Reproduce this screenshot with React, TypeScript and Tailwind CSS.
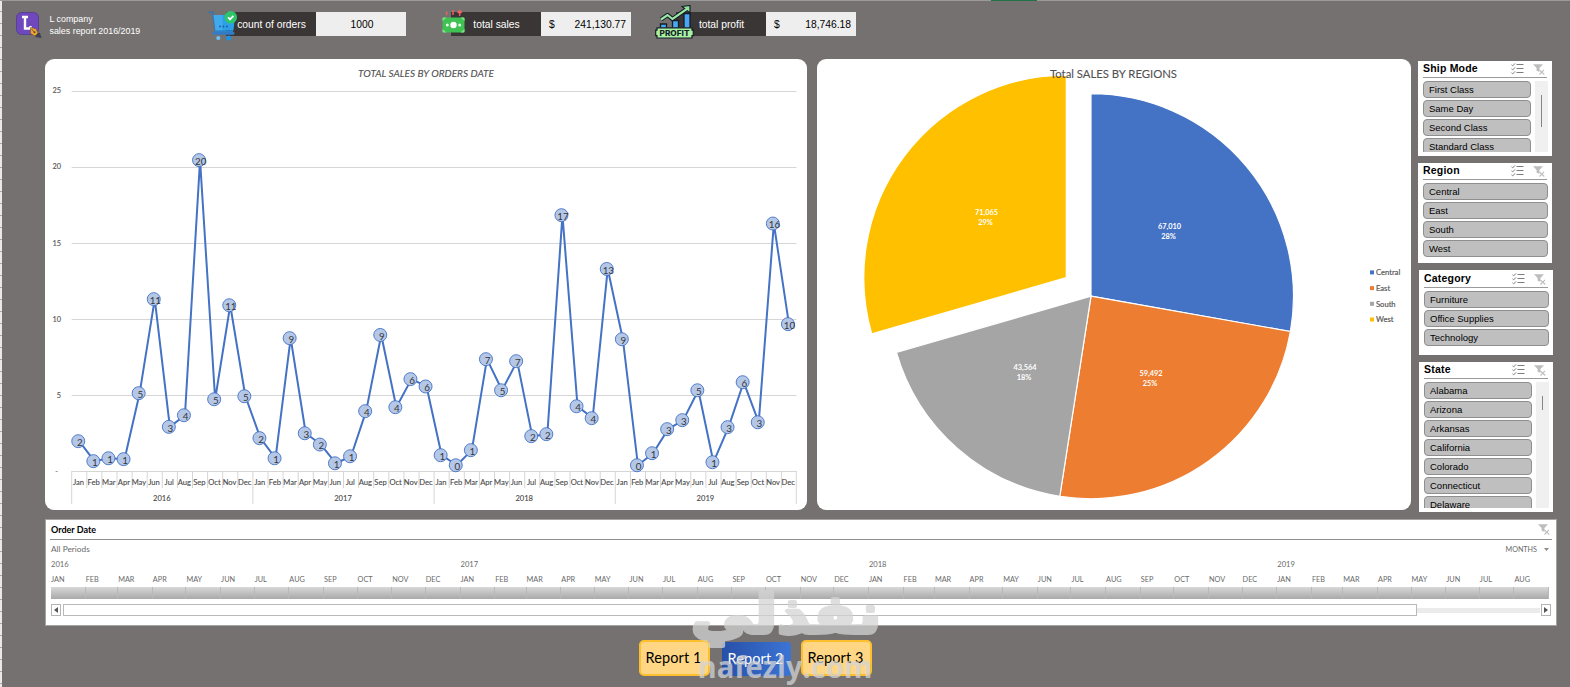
import type { ReactNode } from 'react';

const MONTHS = ['Jan', 'Feb', 'Mar', 'Apr', 'May', 'Jun', 'Jul', 'Aug', 'Sep', 'Oct', 'Nov', 'Dec'];
const YEARS = [2016, 2017, 2018, 2019];

// monthly sales, in thousands
const SALES = [
  1.99, 0.68, 0.87, 0.81, 5.14, 11.31, 2.93, 3.69, 20.43, 4.74, 10.91, 4.94,
  2.19, 0.87, 8.75, 2.51, 1.77, 0.54, 1.0, 3.96, 8.96, 4.22, 6.06, 5.58,
  1.07, 0.41, 1.4, 7.37, 5.33, 7.24, 2.32, 2.45, 16.82, 4.28, 3.5, 13.29,
  8.68, 0.41, 1.2, 2.78, 3.37, 5.33, 0.61, 2.91, 5.86, 3.23, 16.27, 9.67,
];

const REGIONS = [
  { name: 'Central', value: 67010, label: '67,010', percent: '28%', color: '#4472c4', x: 1169.5, y: 227 },
  { name: 'East', value: 59492, label: '59,492', percent: '25%', color: '#ed7d31', x: 1151, y: 374 },
  { name: 'South', value: 43564, label: '43,564', percent: '18%', color: '#a5a5a5', x: 1025, y: 368 },
  { name: 'West', value: 71065, label: '71,065', percent: '29%', color: '#ffc000', x: 986.5, y: 213 },
];

const STEP = 15.1;
const LEFT = 71.7;
const BASE = 471.5;
const pointX = (i: number) => LEFT + (i + 0.5) * STEP;
const pointY = (v: number) => BASE - v * 15.24;

function LineChart() {
  return (
    <section className="h-[451px] w-[762px] overflow-hidden rounded-[9px] bg-white">
      <svg className="block font-[Lato,sans-serif]" width="762" height="451" viewBox="45 59 762 451">
        <text x="426" y="77" textAnchor="middle" fontSize="10.4" fontStyle="italic" fill="#505050" stroke="#505050" strokeWidth="0.1" textLength="136" lengthAdjust="spacingAndGlyphs">
          TOTAL SALES BY ORDERS DATE
        </text>
        {[0, 5, 10, 15, 20, 25].map((v) => (
          <g key={v}>
            <line x1={LEFT} x2="796.5" y1={Math.round(pointY(v)) + (v ? 0.5 : -0.5)} y2={Math.round(pointY(v)) + (v ? 0.5 : -0.5)} stroke="#d6d6d6" />
            <text x={v ? 61 : 58} y={pointY(v) + 2.6} textAnchor="end" fontSize="7.4" fill="#595959" stroke="#595959" strokeWidth="0.15">
              {v || '-'}
            </text>
          </g>
        ))}
        {SALES.map((_, i) => (
          <g key={i}>
            <line x1={LEFT + i * STEP} x2={LEFT + i * STEP} y1="471" y2={i % 12 ? 488 : 504} stroke="#d6d6d6" />
            <text x={pointX(i) - 0.7} y="485" textAnchor="middle" fontSize="7.6" fill="#484848" stroke="#484848" strokeWidth="0.1">
              {MONTHS[i % 12]}
            </text>
          </g>
        ))}
        <line x1="796.3" x2="796.3" y1="471" y2="504" stroke="#d6d6d6" />
        {YEARS.map((year, i) => (
          <text key={year} x={LEFT + (i + 0.5) * 12 * STEP - 0.5} y="501" textAnchor="middle" fontSize="7.6" fill="#484848" stroke="#484848" strokeWidth="0.1">
            {year}
          </text>
        ))}
        <polyline fill="none" stroke="#4472c4" strokeWidth="2" strokeLinejoin="round" points={SALES.map((v, i) => `${pointX(i)},${pointY(v)}`).join(' ')} />
        {SALES.map((v, i) => (
          <g key={i}>
            <circle cx={pointX(i) - 1} cy={pointY(v)} r="6.5" fill="#b4c7e7" stroke="#4472c4" strokeWidth="0.9" />
            <text x={pointX(i) + 0.6} y={pointY(v) + 4.8} textAnchor="middle" fontSize="9.8" fill="#363636">
              {Math.round(v)}
            </text>
          </g>
        ))}
      </svg>
    </section>
  );
}

function slicePath(cx: number, cy: number, r: number, from: number, to: number) {
  const x = (a: number) => cx + r * Math.sin(a);
  const y = (a: number) => cy - r * Math.cos(a);
  return `M${cx} ${cy}L${x(from)} ${y(from)}A${r} ${r} 0 0 1 ${x(to)} ${y(to)}Z`;
}

function PieChart() {
  const total = REGIONS.reduce((sum, r) => sum + r.value, 0);
  let angle = 0;
  const slices = REGIONS.map((r) => {
    const from = angle;
    angle += (r.value / total) * Math.PI * 2;
    return { ...r, from, to: angle };
  });

  return (
    <section className="h-[451px] w-[594px] overflow-hidden rounded-[9px] bg-white">
      <svg className="block font-[Lato,sans-serif]" width="594" height="451" viewBox="817 59 594 451">
        {slices.map((s) => (
          <path
            key={s.name}
            d={s.name === 'West' ? slicePath(1066.3, 277.7, 202.5, s.from, s.to) : slicePath(1091, 296.2, 202.5, s.from, s.to)}
            fill={s.color}
            stroke="#fff"
            strokeWidth="1.2"
          />
        ))}
        {slices.map((s) => (
          <g key={s.name} textAnchor="middle" fontSize="7.4" fontWeight="700" fill="#fff">
            <text x={s.x} y={s.y + 2.2}>{s.label}</text>
            <text x={s.x - 1} y={s.y + 12.2}>{s.percent}</text>
          </g>
        ))}
        <text x="1113.5" y="78" textAnchor="middle" fontSize="11.4" fill="#505050" stroke="#505050" strokeWidth="0.1" textLength="127" lengthAdjust="spacingAndGlyphs">
          Total SALES BY REGIONS
        </text>
        {slices.map((s, i) => (
          <g key={s.name}>
            <rect x="1370" y={270.4 + i * 15.7} width="4" height="4" fill={s.color} />
            <text x="1376" y={275.3 + i * 15.7} fontSize="7.6" fill="#595959" stroke="#595959" strokeWidth="0.2">{s.name}</text>
          </g>
        ))}
      </svg>
    </section>
  );
}

function ClearFilterIcon() {
  return (
    <svg width="12" height="11" viewBox="0 0 12 11" fill="none">
      <path d="M0 0.2h10L6.4 4v3.800L3.600 6.800V4z" fill="#bdbdbd" />
      <path d="M6.300 5.800l5 4.700M11 5.800l-4.500 4.700" stroke="#bdbdbd" strokeWidth="1.100" />
    </svg>
  );
}

function MultiSelectIcon() {
  return (
    <svg width="13" height="12" viewBox="0 0 13 12" fill="none" stroke="#7d7d7d" strokeWidth="1">
      <path d="M5.500 1.500h7M5.500 5.500h7M5.500 9.500h7" />
      <path d="M0.500 1.800l1.200 1.100L4 0.400M0.500 5.800l1.200 1.100L4 4.400M0.500 9.800l1.200 1.100L4 8.400" />
    </svg>
  );
}

type SlicerProps = {
  title: string;
  items: string[];
  className: string;
  thumb?: string;
};

function Slicer({ title, items, className, thumb }: SlicerProps) {
  return (
    <section className={`flex w-[134px] flex-col overflow-hidden bg-white pb-1 pl-[5px] pr-1 ${className}`}>
      <header className="mr-px flex h-[17px] shrink-0 items-center border-b border-[#9a9a9a] pr-0.5">
        <h2 className="flex-1 text-[10.5px] font-bold tracking-[0.2px] text-black">{title}</h2>
        <MultiSelectIcon />
        <span className="ml-[9px]">
          <ClearFilterIcon />
        </span>
      </header>
      <div className="mt-[3px] flex min-h-0 flex-1 gap-1 overflow-hidden">
        <ul className="flex flex-1 flex-col gap-0.5">
          {items.map((item) => (
            <li key={item} className="h-[17px] shrink-0 rounded-[4px] border border-[#8f8f8f] bg-[#bfbfbf] px-[5px] text-[9.5px] leading-[15.5px] text-black">
              {item}
            </li>
          ))}
        </ul>
        {thumb && (
          <div className="flex w-[13px] justify-center bg-[#f0f0f0]">
            <div className={`w-px bg-[#858585] ${thumb}`} />
          </div>
        )}
      </div>
    </section>
  );
}

const timeline = YEARS.flatMap((year) =>
  MONTHS.map((name, m) => ({ year, name: name.toUpperCase(), first: m === 0, days: new Date(year, m + 1, 0).getDate() })),
).slice(0, 44);

function Timeline() {
  return (
    <section className="ml-[45px] mt-[7px] h-[107px] w-[1512px] border border-[#a5a3a2] bg-white px-1 font-[Lato,sans-serif] text-[#6a6a6a]">
      <header className="flex h-5 items-center justify-between border-b border-[#8f8f8f] pr-0.5">
        <h2 className="pl-px text-[9px] font-bold text-black">Order Date</h2>
        <ClearFilterIcon />
      </header>
      <div className="flex h-[18px] items-center justify-between pl-px pr-[3px]">
        <span className="pt-px text-[8.3px]">All Periods</span>
        <span className="flex items-center gap-[7px] pt-0.5 text-[7.2px]">
          MONTHS
          <svg width="5" height="3" viewBox="0 0 5 3">
            <path d="M0 0h5L2.5 3z" fill="#8a8a8a" />
          </svg>
        </span>
      </div>
      <div className="flex w-[1499px] pl-px">
        {timeline.map((m) => (
          <div key={`${m.year}-${m.name}`} className="min-w-0 basis-0 text-[7.3px]" style={{ flexGrow: m.days }}>
            <div className="h-[13px] whitespace-nowrap text-[7.6px] leading-[13px]">{m.first ? m.year : ''}</div>
            <div className="h-[15px] leading-[17px]">{m.name}</div>
            <div className="mt-px h-[12px] border-r border-[#b9b9b9] bg-linear-to-b from-[#d8d8d8] to-[#a9a9a9]" />
          </div>
        ))}
      </div>
      <div className="mt-[5px] flex h-3 items-center">
        <span className="ml-px flex h-3 w-2.5 items-center justify-center border border-[#b5b5b5]">
          <svg width="4" height="6" viewBox="0 0 4 6"><path d="M4 0v6L0 3z" fill="#555" /></svg>
        </span>
        <span className="ml-0.5 h-3 w-[1354px] border border-[#b9b9b9]" />
        <span className="h-[5px] flex-1 bg-[#ebebeb]" />
        <span className="ml-px mr-px flex h-3 w-2.5 items-center justify-center border border-[#b5b5b5]">
          <svg width="4" height="6" viewBox="0 0 4 6"><path d="M0 0v6l4-3z" fill="#555" /></svg>
        </span>
      </div>
    </section>
  );
}

function LogoIcon() {
  return (
    <svg width="26" height="27" viewBox="0 0 26 27">
      <rect x="0.5" y="0.5" width="22" height="22" rx="5" fill="#7048bd" stroke="#574193" />
      <path d="M6 5h6M9 5v11.500h5.500v-2.500" fill="none" stroke="#fff" strokeWidth="2.400" />
      <path d="M18 20l6 1 1.500 5-6-1z" fill="#3d4057" />
      <path d="M14.500 15.500l5.500 1.300 2 4.200-3 3-4.400-2.500z" fill="#f2a72b" stroke="#6e5130" strokeWidth="0.6" />
      <path d="M15.500 17l2.600 3.100" stroke="#5b4639" strokeWidth="0.8" />
      <circle cx="18.500" cy="20.300" r="1" fill="#5b4639" />
    </svg>
  );
}

function CartIcon() {
  return (
    <svg width="31" height="31" viewBox="0 0 31 31">
      <path d="M0.500 1.300h4.300l3 20.500" fill="none" stroke="#3d72b2" strokeWidth="1.800" />
      <path d="M5.500 4H27l-1.500 15.500H7.500z" fill="#2c9fe8" />
      <path d="M5.500 4h9v15.500h-7z" fill="#53b7ef" opacity=".5" />
      <path d="M7 19.500h18v3H7z" fill="#2589d6" />
      <path d="M5 20.800h20c2 0 2 3 0 3H7c-3 0-3.500-1.500-2-3z" fill="#337cc5" />
      <circle cx="12" cy="15.500" r=".9" fill="#1a5a9a" />
      <circle cx="15.500" cy="15.500" r=".9" fill="#1a5a9a" />
      <circle cx="19" cy="15.500" r=".9" fill="#1a5a9a" />
      <circle cx="10.300" cy="27" r="2.100" fill="#68c4ef" />
      <circle cx="20.700" cy="27" r="2.500" fill="#1595e7" />
      <circle cx="22.700" cy="6.300" r="6.300" fill="#2fc46c" />
      <path d="M20 6.200l2 2.200 3.400-3.600" fill="none" stroke="#fff" strokeWidth="1.700" />
    </svg>
  );
}

function MoneyIcon() {
  return (
    <svg width="23" height="24" viewBox="0 0 23 24">
      <path d="M4.700 2.500v3.500M11 1v5M17.700 3v4" stroke="#ee6262" strokeWidth="1.400" />
      <path d="M14.800 3.300L17.700.5l2.800 2.800-2.800 1.600z" fill="#ee6262" />
      <rect x="0.5" y="8.500" width="22" height="15" rx="1.500" fill="#3fc153" />
      <path d="M.5 12V9.500q0-1 1-1H4.500zM22.500 12V9.500q0-1-1-1h-3zM.5 20v2.500q0 1 1 1h3zM22.500 20v2.500q0 1-1 1h-3z" fill="#86e08b" />
      <circle cx="11.500" cy="16" r="3.200" fill="#fff" />
      <circle cx="5.300" cy="16" r="1.500" fill="#e6ffe6" />
      <circle cx="17.700" cy="16" r="1.500" fill="#e6ffe6" />
    </svg>
  );
}

function ProfitIcon() {
  return (
    <svg width="39" height="34" viewBox="0 0 39 34">
      <g fill="#4aa7f5" stroke="#161d27" strokeWidth="1.300">
        <path d="M5.500 19h6v5h-6zM17.500 15.500h6V24h-6zM29 8.500h6V24h-6z" />
      </g>
      <path d="M6 14.500l6.500-4.500 5 4L31 4.500" fill="none" stroke="#161d27" strokeWidth="4.200" strokeLinejoin="round" />
      <path d="M27 1.500l8-1v7.500z" fill="#8fe29a" stroke="#161d27" strokeWidth="1.200" />
      <path d="M6 14.500l6.500-4.500 5 4L32 3.800" fill="none" stroke="#9be8a4" strokeWidth="2.200" />
      <path d="M2 22.800h35v2.400h1.300v5.500H37v2.300H2v-2.300H.7v-5.500H2z" fill="#aaf2a3" stroke="#161d27" strokeWidth="1.200" />
      <text x="19.500" y="30.700" textAnchor="middle" className="font-[Inter,sans-serif]" fontSize="7.500" fontWeight="800" fill="#161d27" textLength="30" lengthAdjust="spacingAndGlyphs">
        PROFIT
      </text>
    </svg>
  );
}

type KpiProps = {
  label: string;
  icon: ReactNode;
  iconClass: string;
  className: string;
  children: ReactNode;
};

function Kpi({ label, icon, iconClass, className, children }: KpiProps) {
  return (
    <div className={`relative flex h-6 w-[180px] text-[10.300px] ${className}`}>
      <div className="flex w-[90px] items-center justify-center bg-[#3a3636] pl-px text-white">
        <span className="whitespace-nowrap pt-px">{label}</span>
      </div>
      <div className="flex w-[90px] items-center bg-[#eeeeee] pt-px text-black">{children}</div>
      <span className={`absolute ${iconClass}`}>{icon}</span>
    </div>
  );
}

export default function App() {
  return (
    <div className="relative flex h-[687px] w-[1570px] overflow-hidden bg-[#757170] font-[Liberation_Sans,Arial,sans-serif]">
      {/* sheet edge */}
      <div className="absolute left-0 top-0 h-full w-[1.500px] bg-[repeating-linear-gradient(to_bottom,#e9e9e9_0_11px,#a8a8a8_11px_12px)]" />
      <div className="absolute left-0 top-0 h-px w-full bg-[#9b9999]" />
      <div className="absolute left-[991px] top-0 h-px w-[46px] bg-[#217346]" />

      <div className="flex w-full flex-col">
        <header className="flex h-[59px] shrink-0 items-start pl-4">
          <div className="flex w-[210px] pt-3">
            <LogoIcon />
            <div className="ml-[7.500px] pt-px text-[8.900px] leading-[12px] text-white">
              <p>L company</p>
              <p>sales report 2016/2019</p>
            </div>
          </div>
          <Kpi label="count of orders" icon={<CartIcon />} iconClass="-left-[18px] -top-[1px]" className="mt-3">
            <span className="w-full pl-0.5 text-center">1000</span>
          </Kpi>
          <Kpi label="total sales" icon={<MoneyIcon />} iconClass="-left-[9px] -top-[3px]" className="ml-[45px] mt-3">
            <span className="ml-2 flex-1">$</span>
            <span className="mr-[5px]">241,130.77</span>
          </Kpi>
          <Kpi label="total profit" icon={<ProfitIcon />} iconClass="-left-[21px] -top-[7px]" className="ml-[45px] mt-3">
            <span className="ml-2 flex-1">$</span>
            <span className="mr-[5px]">18,746.18</span>
          </Kpi>
        </header>

        <main className="flex h-[453px] shrink-0 pl-[45px]">
          <LineChart />
          <div className="ml-2.5">
            <PieChart />
          </div>
          <aside className="ml-[7px] flex flex-col pt-0.5">
            <Slicer title="Ship Mode" items={['First Class', 'Same Day', 'Second Class', 'Standard Class']} className="h-[95px]" thumb="mt-[14px] h-8" />
            <Slicer title="Region" items={['Central', 'East', 'South', 'West']} className="mt-[7px] h-[100px]" />
            <Slicer title="Category" items={['Furniture', 'Office Supplies', 'Technology']} className="ml-px mt-[7px] h-[85px] pt-px" />
            <Slicer
              title="State"
              items={['Alabama', 'Arizona', 'Arkansas', 'California', 'Colorado', 'Connecticut', 'Delaware']}
              className="ml-px mt-[7px] h-[150px]"
              thumb="mt-[14px] h-3.5"
            />
          </aside>
        </main>

        <Timeline />

        <nav className="flex items-start pl-[639px] pt-[14px] font-[Lato,sans-serif] text-[14.500px] tracking-[0.100px] text-black">
          <button className="flex h-9 w-[71px] items-center justify-center whitespace-nowrap rounded-[5px] border-2 border-[#fdbf2d] bg-[#ffd784] pr-0.5">Report 1</button>
          <button className="ml-3 mt-0.5 flex h-[34px] w-[69px] items-center justify-center whitespace-nowrap rounded-[4px] bg-linear-to-r from-[#2850a8] to-[#3c74d4] pr-0.5 text-white">Report 2</button>
          <button className="ml-2.5 flex h-9 w-[71px] items-center justify-center whitespace-nowrap rounded-[5px] border-2 border-[#fdbf2d] bg-[#ffd784] pr-0.5">Report 3</button>
        </nav>
      </div>

      {/* watermark */}
      <svg className="pointer-events-none absolute left-[680px] top-[580px] opacity-75" width="210" height="107" viewBox="680 580 210 107" fill="#d3d3d3" stroke="#d3d3d3">
        <text x="786" y="633" textAnchor="middle" className="font-[DejaVu_Sans,sans-serif]" fontSize="54" fontWeight="700" strokeWidth="4" strokeLinejoin="round" direction="rtl" textLength="190" lengthAdjust="spacingAndGlyphs">
          نفذلي
        </text>
        <text x="785" y="678" textAnchor="middle" className="font-[Open_Sans,sans-serif]" fontSize="30" fontWeight="700" strokeWidth="0" textLength="175" lengthAdjust="spacingAndGlyphs">
          nafezly.com
        </text>
      </svg>
    </div>
  );
}
